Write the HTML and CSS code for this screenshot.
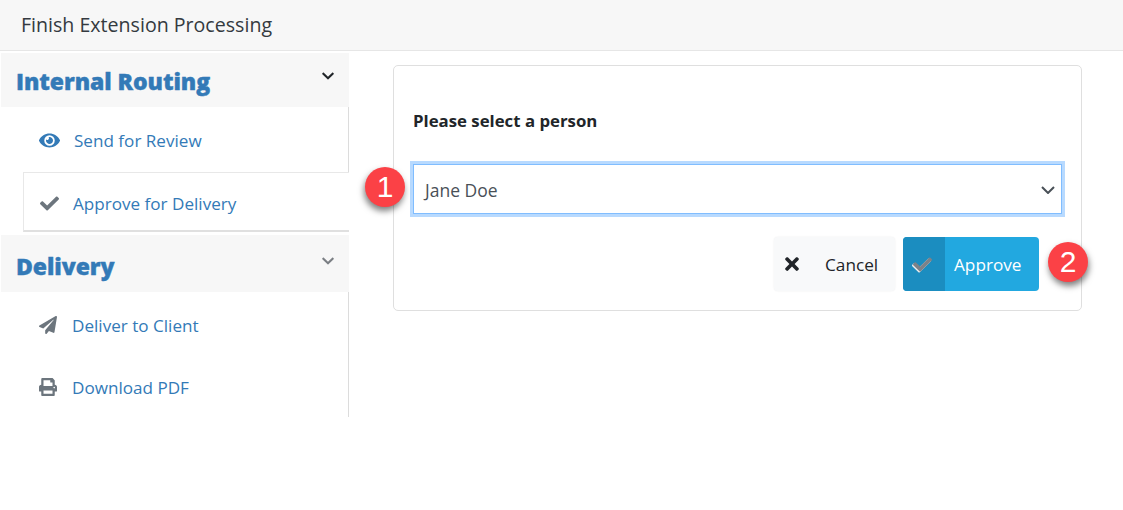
FILE: index.html
```html
<!DOCTYPE html>
<html lang="en">
<head>
<meta charset="utf-8">
<title>Finish Extension Processing</title>
<link rel="stylesheet" href="styles.css">
</head>
<body>
<header class="topbar">Finish Extension Processing</header>
<div class="layout">
  <nav class="sidebar">
    <div class="group-head group-first">
      <h2>Internal Routing</h2>
      <svg class="chev chev-dark" viewBox="0 0 448 512"><path d="M207.029 381.476L12.686 187.132c-9.373-9.373-9.373-24.569 0-33.941l22.667-22.667c9.357-9.357 24.522-9.375 33.901-.04L224 284.505l154.745-154.021c9.379-9.335 24.544-9.317 33.901.04l22.667 22.667c9.373 9.373 9.373 24.569 0 33.941L240.971 381.476c-9.373 9.372-24.569 9.372-33.942 0z"/></svg>
    </div>
    <ul class="items">
      <li class="item item-review">
        <svg class="ico ico-eye" viewBox="0 0 576 512"><path d="M572.52 241.4C518.29 135.59 410.93 64 288 64S57.68 135.64 3.48 241.41a32.35 32.35 0 0 0 0 29.19C57.71 376.41 165.07 448 288 448s230.32-71.64 284.52-177.41a32.35 32.35 0 0 0 0-29.19zM288 400a144 144 0 1 1 144-144 143.93 143.93 0 0 1-144 144zm0-240a95.31 95.31 0 0 0-25.31 3.79 47.85 47.85 0 0 1-66.9 66.9A95.78 95.78 0 1 0 288 160z"/></svg>
        <a>Send for Review</a>
      </li>
      <li class="item item-active">
        <svg class="ico ico-grey" viewBox="0 0 512 512"><path d="M173.898 439.404l-166.4-166.4c-9.997-9.997-9.997-26.206 0-36.204l36.203-36.204c9.997-9.998 26.207-9.998 36.204 0L192 312.69 432.095 72.596c9.997-9.997 26.207-9.997 36.204 0l36.203 36.204c9.997 9.997 9.997 26.206 0 36.204l-294.4 294.401c-9.998 9.997-26.207 9.997-36.204-.001z"/></svg>
        <a>Approve for Delivery</a>
      </li>
    </ul>
    <div class="group-head group-second">
      <h2>Delivery</h2>
      <svg class="chev chev-grey" viewBox="0 0 448 512"><path d="M207.029 381.476L12.686 187.132c-9.373-9.373-9.373-24.569 0-33.941l22.667-22.667c9.357-9.357 24.522-9.375 33.901-.04L224 284.505l154.745-154.021c9.379-9.335 24.544-9.317 33.901.04l22.667 22.667c9.373 9.373 9.373 24.569 0 33.941L240.971 381.476c-9.373 9.372-24.569 9.372-33.942 0z"/></svg>
    </div>
    <ul class="items items-last">
      <li class="item item-deliver">
        <svg class="ico ico-grey" viewBox="0 0 512 512"><path d="M476 3.2L12.5 270.6c-18.1 10.4-15.8 35.6 2.2 43.2L121 358.4l287.3-253.2c5.500-4.900 13.300 2.600 8.600 8.300L176 407v80.500c0 23.600 28.500 32.900 42.500 15.800L282 426l124.600 52.200c14.200 6 30.400-2.900 33-18.200l72-432C515 7.800 493.300-6.800 476 3.200z"/></svg>
        <a>Deliver to Client</a>
      </li>
      <li class="item item-deliver">
        <svg class="ico ico-grey" viewBox="0 0 512 512"><path d="M448 192V77.250c0-8.490-3.370-16.620-9.370-22.630L393.370 9.370c-6-6-14.140-9.370-22.630-9.370H96C78.330 0 64 14.330 64 32v160c-35.350 0-64 28.650-64 64v112c0 8.840 7.160 16 16 16h48v96c0 17.670 14.330 32 32 32h320c17.670 0 32-14.330 32-32v-96h48c8.840 0 16-7.160 16-16V256c0-35.350-28.650-64-64-64zm-64 256H128v-96h256v96zm0-224H128V64h192v48c0 8.840 7.160 16 16 16h48v96zm48 72c-13.250 0-24-10.750-24-24 0-13.260 10.750-24 24-24s24 10.740 24 24c0 13.250-10.750 24-24 24z"/></svg>
        <a>Download PDF</a>
      </li>
    </ul>
  </nav>
  <main class="main">
    <section class="card">
      <label class="field-label">Please select a person</label>
      <div class="select-box">
        <span>Jane Doe</span>
        <svg class="select-chev" viewBox="0 0 14 8"><path d="M1 1l6 6 6-6"/></svg>
      </div>
      <div class="actions">
        <button class="btn btn-cancel">
          <svg class="btn-x" viewBox="0 0 352 512"><path d="M242.72 256l100.070-100.070c12.280-12.280 12.280-32.190 0-44.480l-22.240-22.240c-12.280-12.280-32.190-12.280-44.480 0L176 189.280 75.930 89.210c-12.280-12.280-32.190-12.280-44.480 0L9.210 111.450c-12.280 12.280-12.280 32.190 0 44.480L109.280 256 9.210 356.070c-12.280 12.280-12.280 32.190 0 44.480l22.240 22.240c12.280 12.280 32.200 12.280 44.480 0L176 322.720l100.070 100.070c12.280 12.280 32.200 12.280 44.480 0l22.240-22.240c12.280-12.280 12.280-32.190 0-44.480L242.720 256z"/></svg>
          <span>Cancel</span>
        </button>
        <button class="btn btn-approve">
          <span class="approve-ico"><svg viewBox="0 0 512 512"><path d="M173.898 439.404l-166.4-166.4c-9.997-9.997-9.997-26.206 0-36.204l36.203-36.204c9.997-9.998 26.207-9.998 36.204 0L192 312.69 432.095 72.596c9.997-9.997 26.207-9.997 36.204 0l36.203 36.204c9.997 9.997 9.997 26.206 0 36.204l-294.4 294.401c-9.998 9.997-26.207 9.997-36.204-.001z"/></svg></span>
          <span class="approve-text">Approve</span>
        </button>
      </div>
    </section>
  </main>
</div>
<div class="badge badge-one">1</div>
<div class="badge badge-two">2</div>
</body>
</html>
```
FILE: styles.css
```css
* { box-sizing: border-box; }
html, body { margin: 0; padding: 0; }
body {
  position: relative;
  width: 1123px;
  height: 510px;
  overflow: hidden;
  background: #fff;
  font-family: "Open Sans", "Noto Sans", sans-serif;
  color: #212529;
}
.topbar {
  height: 51px;
  padding: 12px 0 0 21px;
  background: #f7f7f7;
  border-bottom: 1px solid #e6e6e6;
  font-size: 19.600px;
  line-height: 26px;
  color: #343a40;
}
.layout { display: flex; align-items: flex-start; }
.sidebar { width: 348px; margin-left: 1px; padding-top: 2px; flex: none; }
.group-head {
  position: relative;
  background: #f7f7f7;
  padding-left: 15px;
}
.group-first { height: 54px; }
.group-second { height: 57px; margin-top: 3px; }
.group-head h2 {
  margin: 0;
  font-size: 23px;
  font-weight: 800;
  color: #337ab7;
  line-height: 31px;
  letter-spacing: -0.07px;
  -webkit-text-stroke: 0.4px #337ab7;
}
.group-first h2 { padding-top: 13px; }
.group-second h2 { padding-top: 16px; }
.chev {
  position: absolute;
  right: 15px;
  width: 12px;
  height: 14px;
}
.group-first .chev { top: 16px; }
.group-second .chev { top: 19px; }
.chev-dark { fill: #212529; }
.chev-grey { fill: #7b7f84; }
.items {
  list-style: none;
  margin: 0;
  padding: 0;
  border-right: 1px solid #dcdcdc;
}
.item {
  display: flex;
  align-items: center;
  font-size: 17.100px;
  color: #337ab7;
}
.item a { color: #337ab7; }
.item-review { height: 65px; padding-left: 38px; padding-top: 2px; gap: 14px; }
.item-active {
  height: 60px;
  margin-left: 22px;
  margin-right: -1px;
  padding-left: 16px;
  padding-top: 4px;
  gap: 14px;
  background: #fff;
  border: 1px solid #e8e8e8;
  border-bottom: 2px solid #e0e0e0;
  border-right: 0;
}
.items-last { height: 125px; padding-top: 2px; }
.item-deliver { height: 62px; padding-left: 38px; gap: 15px; }
.ico { flex: none; }
.ico-eye { width: 21px; height: 19px; fill: #337ab7; }
.item-active .ico { width: 19px; height: 19px; }
.item-deliver .ico { width: 18px; height: 18px; }
.ico-grey { fill: #6c757d; }
.main { flex: 1; padding: 14px 41px 0 44px; }
.card {
  height: 246px;
  border: 1px solid #dfdfdf;
  border-radius: 5px;
  padding: 43px 19px 0;
  background: #fff;
}
.field-label {
  display: block;
  font-size: 16.800px;
  line-height: 24px;
  font-weight: 700;
  color: #212529;
}
.select-box {
  display: flex;
  align-items: center;
  justify-content: space-between;
  height: 50px;
  margin-top: 31px;
  padding: 1px 6px 0 11px;
  border: 1px solid #80bdff;
  box-shadow: 0 0 0 3px #b8daff;
  font-size: 17.500px;
  color: #495057;
  background: #fff;
}
.select-chev { width: 14px; height: 8px; fill: none; stroke: #495057; stroke-width: 2; }
.actions { display: flex; justify-content: flex-end; gap: 8px; margin-top: 23px; padding-right: 23px; }
.btn {
  display: flex;
  align-items: center;
  height: 54px;
  padding: 0;
  border: 0;
  border-radius: 4px;
  font-family: inherit;
  font-size: 17.200px;
}
.btn-cancel {
  width: 121px;
  padding-left: 11px;
  gap: 26px;
  background: #f8f9fa;
  color: #212529;
  box-shadow: 0 0 2px rgba(0, 0, 0, 0.08);
}
.btn-x { width: 14px; height: 20px; fill: #212529; }
.btn-approve { width: 136px; background: #22a8e0; color: #fff; overflow: hidden; }
.approve-ico {
  display: flex;
  align-items: center;
  justify-content: center;
  width: 42px;
  height: 100%;
  background: #1b8dc0;
}
.approve-ico svg {
  width: 19px;
  height: 19px;
  margin-right: 3px;
  fill: #7c8289;
  filter: drop-shadow(-1px 1px 0 #eeeeee);
}
.approve-text { margin-left: 9px; }
.badge {
  position: absolute;
  width: 40px;
  height: 40px;
  border-radius: 50%;
  background: #fb4146;
  color: #fff;
  text-align: center;
  font-family: "Liberation Sans", sans-serif;
  font-size: 30px;
  line-height: 40px;
}
.badge-one { left: 365px; top: 167px; box-shadow: -1px 4px 6px rgba(0, 0, 0, 0.5); }
.badge-two { left: 1048px; top: 242px; box-shadow: 1px 4px 6px rgba(0, 0, 0, 0.5); }
```
